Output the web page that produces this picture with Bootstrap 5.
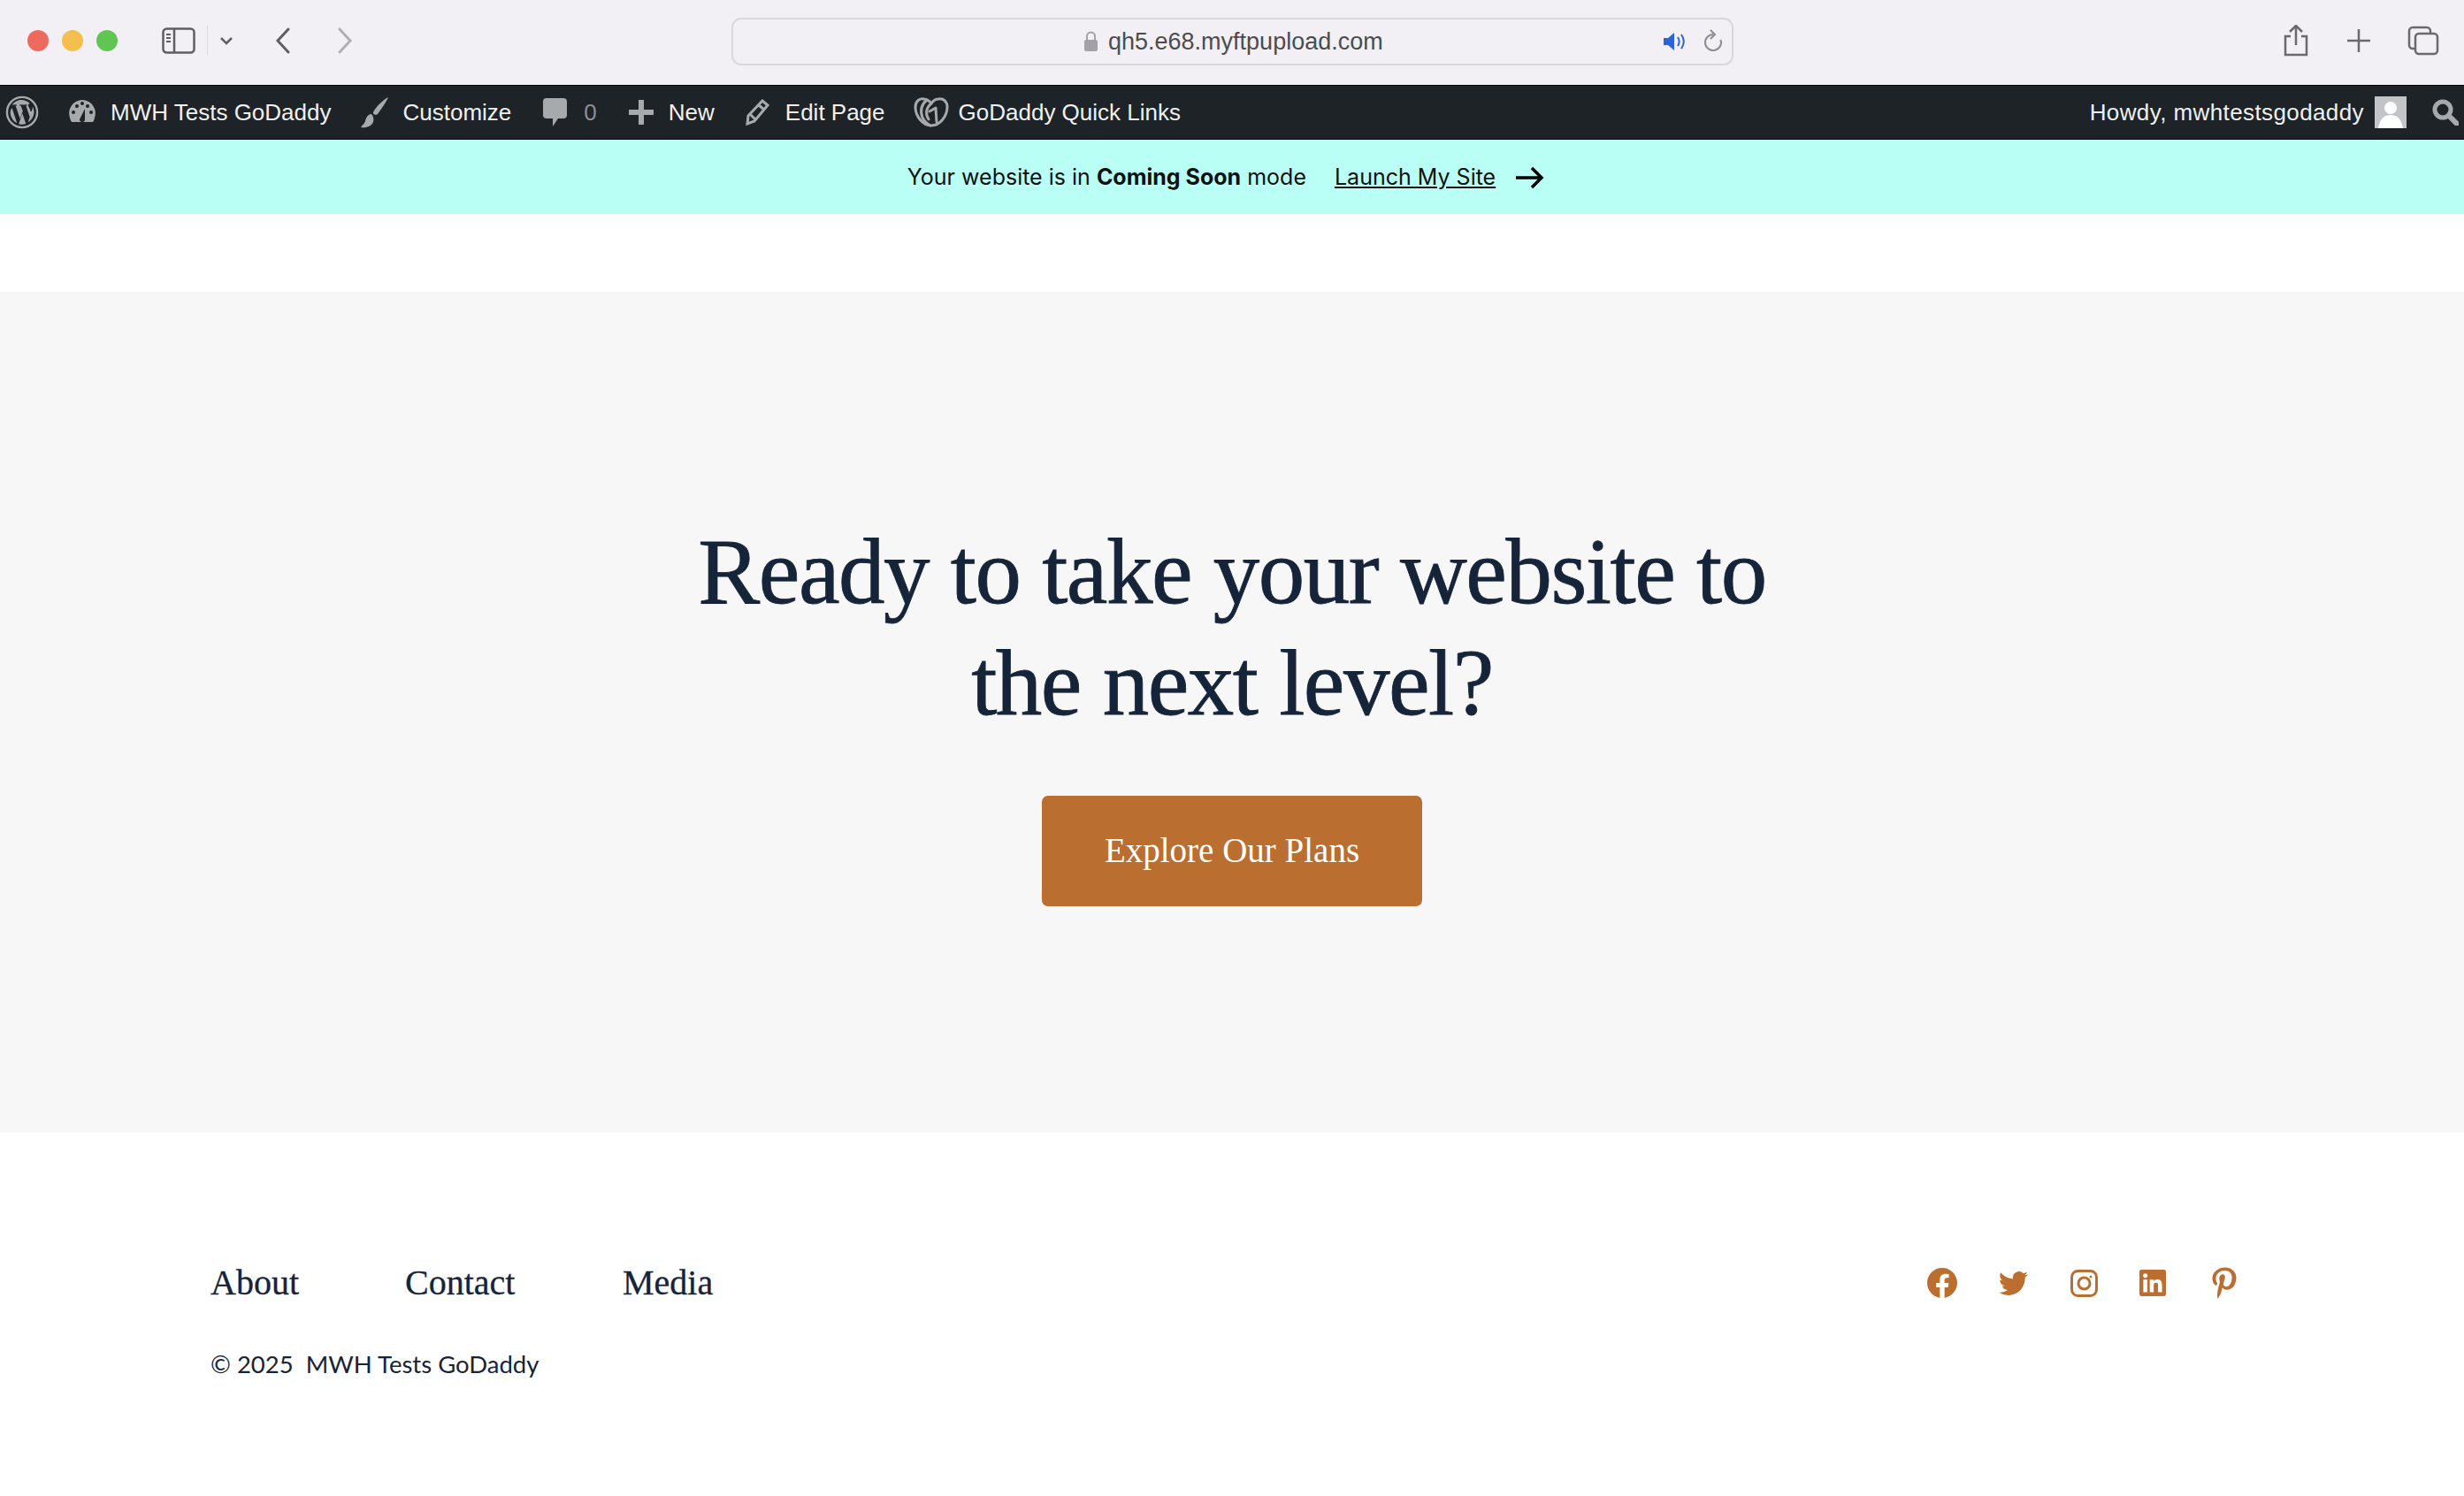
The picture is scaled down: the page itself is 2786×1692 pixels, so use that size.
<!DOCTYPE html>
<html lang="en">
<head>
  <meta charset="UTF-8" />
  <title>MWH Tests GoDaddy</title>
  <meta name="viewport" content="width=device-width, initial-scale=1" />
  <link href="https://cdn.jsdelivr.net/npm/bootstrap@5.3.0/dist/css/bootstrap.min.css" rel="stylesheet" />
  <style>
    body {
      background-color: #fff;
      font-family: "Inter", sans-serif;
    }
    svg { flex-shrink: 0; }
    /* browser toolbar */
    .safari-bar {
      height: 96px;
      background-color: #f2f0f5;
      padding-left: 31px;
      padding-top: 2px;
    }
    .traffic {
      width: 24px;
      height: 24px;
      border-radius: 50%;
      margin-right: 15px;
      margin-top: -6px;
    }
    .url-box {
      width: 1133px;
      height: 54px;
      border: 2px solid #d9d7dc;
      border-radius: 11px;
      font-family: "Liberation Sans", sans-serif;
      font-size: 27px;
      color: #4c4c50;
      padding-left: 396px;
      padding-right: 10px;
      margin-top: -4px;
    }
    /* wp admin bar */
    .admin-bar {
      height: 62px;
      background-color: #1d2327;
      border-top: 1px solid #000;
      border-bottom: 1px solid #000;
      color: #f0f0f1;
      font-family: "Liberation Sans", sans-serif;
      font-size: 26px;
      padding-left: 6px;
      padding-right: 6px;
      white-space: nowrap;
    }
    .bar-num { color: #8c8f94; }
    .howdy-text { letter-spacing: 0.4px; }
    /* coming soon banner */
    .soon-banner {
      height: 84px;
      background-color: #b9fff6;
      color: #111;
      font-size: 25px;
      padding-right: 14px;
      padding-top: 2px;
    }
    .soon-banner a { color: #111; }
    .white-gap { height: 88px; }
    /* hero */
    .hero-block {
      height: 951px;
      background-color: #f7f7f7;
      padding-bottom: 2px;
    }
    .hero-title {
      font-family: "Liberation Serif", serif;
      font-size: 105px;
      line-height: 126px;
      letter-spacing: -1.5px;
      -webkit-text-stroke: 0.8px #16243a;
      color: #16243a;
      margin-bottom: 64px;
    }
    .hero-btn {
      width: 430px;
      height: 125px;
      background-color: #ba6f30;
      color: #fff;
      font-family: "Liberation Serif", serif;
      font-size: 39px;
      border: 0;
      border-radius: 7px;
    }
    /* footer */
    .foot-block {
      height: 411px;
      padding: 144px 257px 0 238px;
      color: #16243a;
    }
    .foot-link {
      font-family: "Liberation Serif", serif;
      font-size: 40px;
      line-height: 52px;
      -webkit-text-stroke: 0.3px #16243a;
      color: #16243a;
      text-decoration: none;
    }
    .foot-copy {
      font-family: "Lato", sans-serif;
      font-size: 27.500px;
      margin-top: 45px;
    }
  </style>
</head>
<body>

  <!-- Browser toolbar -->
  <div class="safari-bar d-flex align-items-center">
    <span class="traffic" style="background:#ee6a5f"></span>
    <span class="traffic" style="background:#f5bf4f"></span>
    <span class="traffic" style="background:#61c554"></span>
    <svg style="margin-left:35px;margin-top:-6px" width="38" height="30" viewBox="0 0 38 30" fill="none" stroke="#5f5f63" stroke-width="2.5"><rect x="1.5" y="1.5" width="35" height="27" rx="4"/><path d="M14 2v26"/><path d="M5 8h5M5 12h5M5 16h5" stroke-width="2"/></svg>
    <span style="width:1px;height:34px;background:#dcdade;margin-left:13px;margin-top:-6px"></span>
    <svg style="margin-left:13px;margin-top:-6px" width="16" height="10" viewBox="0 0 16 10" fill="none" stroke="#5f5f63" stroke-width="2.5"><path d="M2 2l6 6 6-6"/></svg>
    <svg style="margin-left:47px;margin-top:-6px" width="18" height="30" viewBox="0 0 18 30" fill="none" stroke="#5f5f63" stroke-width="3" stroke-linecap="round"><path d="M15 2L3 15l12 13"/></svg>
    <svg style="margin-left:52px;margin-top:-6px" width="18" height="30" viewBox="0 0 18 30" fill="none" stroke="#b0afb3" stroke-width="3" stroke-linecap="round"><path d="M3 2l12 13L3 28"/></svg>
    <div class="url-box d-flex align-items-center" style="margin-left:428px">
      <svg style="margin-right:11px" width="17" height="24" viewBox="0 0 17 24"><path d="M4 11V6a4.500 4.500 0 019 0v5" fill="none" stroke="#a3a3a6" stroke-width="2"/><rect x="1" y="10" width="15" height="13" rx="2" fill="#a3a3a6"/></svg>
      <span class="flex-grow-1">qh5.e68.myftpupload.com</span>
      <svg width="26" height="24" viewBox="0 0 26 24"><path d="M1 8h5l7-6v20l-7-6H1z" fill="#2c63db"/><path d="M17 7c2 3 2 7 0 10M21 4c3.500 5 3.500 11 0 16" fill="none" stroke="#2c63db" stroke-width="2"/></svg>
      <svg style="margin-left:20px" width="22" height="28" viewBox="0 0 22 28" fill="none" stroke="#8d8c90" stroke-width="2"><path d="M11 6a9 9 0 108.500 6"/><path d="M8 1l5 5-5 5"/></svg>
    </div>
    <svg style="margin-left:621px;margin-top:-6px" width="30" height="36" viewBox="0 0 30 36" fill="none" stroke="#6a6a6e" stroke-width="2.500"><path d="M9 13H3v21h24V13h-6"/><path d="M15 23V2M8 8l7-7 7 7"/></svg>
    <svg style="margin-left:42px;margin-top:-6px" width="28" height="28" viewBox="0 0 28 28" stroke="#6a6a6e" stroke-width="2.500"><path d="M14 1v26M1 14h26"/></svg>
    <svg style="margin-left:41px;margin-top:-6px" width="36" height="34" viewBox="0 0 36 34" fill="none" stroke="#6a6a6e" stroke-width="2.500"><path d="M8 26H6a4 4 0 01-4-4V6a4 4 0 014-4h16a4 4 0 014 4v2"/><rect x="9" y="9" width="25" height="23" rx="4"/></svg>
  </div>

  <!-- WP admin bar -->
  <div class="admin-bar d-flex align-items-center">
    <svg width="38" height="40" viewBox="0 0 40 40"><circle cx="20" cy="20" r="18" fill="none" stroke="#a7aaad" stroke-width="2.500"/><path d="M6 20c0 6 3.500 10.500 8 13L8 15c-1.300 1.500-2 3-2 5zm24-1c0-2-1-3-1.500-4.200-.7-1-1.200-2-1.200-3 0-1.200.8-2.100 2-2.200A14 14 0 008 11h1l4.300-.2.7 1-1.800.2 5.400 16 3.200-9.700-2.300-6.300-1.600-.2.200-1 4.300.2 4.300-.2.700 1-1.800.2 5.300 15.900 1.500-4.900c.6-2 1.100-3.400 1.100-4.600zM20.300 21.300L16 34a14 14 0 008.500-.2zM32.500 13c.2 1.500-.2 3.500-1 5.500L27 31.800A14 14 0 0032.500 13z" fill="#a7aaad"/></svg>
    <svg style="margin-left:33px" width="32" height="30" viewBox="0 0 32 30"><path d="M16 1a15 15 0 00-14 20c.5 3 1.500 5 3 5h22c1.500 0 2.500-2 3-5A15 15 0 0016 1z" fill="#a7aaad"/><path d="M13 23l6-12 0 12a3 3 0 11-6 0z" fill="#1d2327"/><circle cx="6" cy="15" r="2" fill="#1d2327"/><circle cx="10" cy="8" r="2" fill="#1d2327"/><circle cx="16" cy="5" r="2" fill="#1d2327"/><circle cx="22" cy="8" r="2" fill="#1d2327"/><circle cx="26" cy="15" r="2" fill="#1d2327"/></svg>
    <span style="margin-left:16px">MWH Tests GoDaddy</span>
    <svg style="margin-left:33px" width="33" height="36" viewBox="0 0 33 36"><path d="M32 1c-3 1-14 10-17 17-1 2 3 4 5 2 4-5 11-16 12-19zM13 20c-4 0-6 4-7 8-1 3-3 4-5 7 6 1 12-1 14-6 1-3 0-7-2-9z" fill="#a7aaad"/></svg>
    <span style="margin-left:15px">Customize</span>
    <svg style="margin-left:36px" width="27" height="32" viewBox="0 0 27 32"><path d="M4 0h19a4 4 0 014 4v15a4 4 0 01-4 4h-6l-6 9v-9H4a4 4 0 01-4-4V4a4 4 0 014-4z" fill="#a7aaad"/></svg>
    <span class="bar-num" style="margin-left:19px">0</span>
    <svg style="margin-left:36px" width="28" height="28" viewBox="0 0 28 28"><path d="M11 0h6v11h11v6H17v11h-6V17H0v-6h11z" fill="#a7aaad"/></svg>
    <span style="margin-left:17px">New</span>
    <svg style="margin-left:35px" width="27" height="30" viewBox="0 0 27 30" fill="none" stroke="#a7aaad" stroke-width="3"><path d="M19 2l6 5L10 25l-8 3 1-9zM15 7l6 5M6 18l5 5" /></svg>
    <span style="margin-left:18px">Edit Page</span>
    <svg style="margin-left:32px" width="40" height="36" viewBox="0 0 40 36" fill="none" stroke="#a7aaad" stroke-width="3" stroke-linecap="round" stroke-linejoin="round"><path d="M20 33C10 33 2 22 2 12 2 5 7 2 12 3c3 .5 6 2 8 5 2-3 5-5 8-5 6-1 10 3 10 9 0 10-8 21-18 21z"/><path d="M15 4C9 9 7 16 10 24c2 4 5 7 9 9"/><path d="M20 8c-6 5-7 12-3 18"/><path d="M18 17l7-4 1 16"/></svg>
    <span style="margin-left:11px">GoDaddy Quick Links</span>
    <span class="howdy-text ms-auto">Howdy, mwhtestsgodaddy</span>
    <svg style="margin-left:12px" width="36" height="36" viewBox="0 0 36 36"><rect width="36" height="36" fill="#c3c4c7"/><circle cx="18" cy="13" r="7" fill="#fff"/><path d="M4 36c2-12 8-15 14-15s12 3 14 15z" fill="#fff"/></svg>
    <svg style="margin-left:29px" width="30" height="30" viewBox="0 0 30 30" fill="none" stroke="#a7aaad"><circle cx="12" cy="12" r="9" stroke-width="5"/><path d="M19 19l9 9" stroke-width="6" stroke-linecap="round"/></svg>
  </div>

  <!-- Coming soon banner -->
  <div class="soon-banner d-flex align-items-center justify-content-center">
    <span>Your website is in <strong>Coming Soon</strong> mode</span>
    <a href="#" style="margin-left:32px">Launch My Site</a>
    <svg style="margin-left:23px" width="32" height="26" viewBox="0 0 32 26" fill="none" stroke="#000" stroke-width="3.500"><path d="M0 13h29M18 2l11 11-11 11"/></svg>
  </div>
  <div class="white-gap"></div>

  <!-- Hero -->
  <section class="hero-block d-flex flex-column align-items-center justify-content-center text-center">
    <h1 class="hero-title fw-normal">Ready to take your website to<br />the next level?</h1>
    <a href="#" class="hero-btn btn d-flex align-items-center justify-content-center">Explore Our Plans</a>
  </section>

  <!-- Footer -->
  <footer class="foot-block">
    <div class="d-flex align-items-center justify-content-between">
      <div class="d-flex">
        <a href="#" class="foot-link" style="width:220px">About</a>
        <a href="#" class="foot-link" style="width:246px">Contact</a>
        <a href="#" class="foot-link">Media</a>
      </div>
      <div class="d-flex align-items-center">
        <svg width="34" height="34" viewBox="0 0 24 24" fill="#ba6f30"><path d="M24 12.073c0-6.627-5.373-12-12-12s-12 5.373-12 12c0 5.990 4.388 10.954 10.125 11.854v-8.385H7.078v-3.470h3.047V9.430c0-3.007 1.792-4.669 4.533-4.669 1.312 0 2.686.235 2.686.235v2.953H15.830c-1.491 0-1.956.925-1.956 1.874v2.250h3.328l-.532 3.470h-2.796v8.385C19.612 23.027 24 18.062 24 12.073z"/></svg>
        <svg style="margin-left:47px" width="33" height="33" viewBox="0 0 24 24" fill="#ba6f30"><path d="M23.953 4.570a10 10 0 01-2.825.775 4.958 4.958 0 002.163-2.723c-.951.555-2.005.959-3.127 1.184a4.920 4.920 0 00-8.384 4.482C7.690 8.095 4.067 6.130 1.640 3.162a4.822 4.822 0 00-.666 2.475c0 1.710.870 3.213 2.188 4.096a4.904 4.904 0 01-2.228-.616v.060a4.923 4.923 0 003.946 4.827 4.996 4.996 0 01-2.212.085 4.936 4.936 0 004.604 3.417 9.867 9.867 0 01-6.102 2.105c-.390 0-.779-.023-1.170-.067a13.995 13.995 0 007.557 2.209c9.053 0 13.998-7.496 13.998-13.985 0-.210 0-.420-.015-.630A9.935 9.935 0 0024 4.590z"/></svg>
        <svg style="margin-left:48px" width="31" height="31" viewBox="0 0 31 31" fill="none" stroke="#ba6f30" stroke-width="3"><rect x="1.500" y="1.500" width="28" height="28" rx="7"/><circle cx="15.500" cy="15.500" r="6.500"/><circle cx="23" cy="8" r="1.500" fill="#ba6f30" stroke="none"/></svg>
        <svg style="margin-left:47px" width="30" height="30" viewBox="0 0 24 24" fill="#ba6f30"><path d="M20.447 20.452h-3.554v-5.569c0-1.328-.027-3.037-1.852-3.037-1.853 0-2.136 1.445-2.136 2.939v5.667H9.351V9h3.414v1.561h.046c.477-.9 1.637-1.850 3.370-1.850 3.601 0 4.267 2.370 4.267 5.455v6.286zM5.337 7.433c-1.144 0-2.063-.926-2.063-2.065 0-1.138.920-2.063 2.063-2.063 1.140 0 2.064.925 2.064 2.063 0 1.139-.925 2.065-2.064 2.065zm1.782 13.019H3.555V9h3.564v11.452zM22.225 0H1.771C.792 0 0 .774 0 1.729v20.542C0 23.227.792 24 1.771 24h20.451C23.200 24 24 23.227 24 22.271V1.729C24 .774 23.200 0 22.222 0h.003z"/></svg>
        <svg style="margin-left:52px" width="28" height="36" viewBox="0 0 384 512" fill="#ba6f30"><path d="M204 6.500C101.400 6.500 0 74.900 0 185.600 0 256 39.600 296 63.600 296c9.900 0 15.600-27.600 15.600-35.400 0-9.300-23.700-29.100-23.700-67.800 0-80.400 61.200-137.400 140.400-137.400 68.100 0 118.500 38.700 118.500 109.800 0 53.100-21.300 152.700-90.300 152.700-24.900 0-46.200-18-46.200-43.800 0-37.800 26.400-74.400 26.400-113.400 0-66.200-93.900-54.200-93.900 25.800 0 16.800 2.100 35.400 9.600 50.700-13.800 59.400-42 147.900-42 209.100 0 18.900 2.700 37.500 4.500 56.400 3.400 3.800 1.700 3.400 6.900 1.500 50.400-69 48.600-82.500 71.400-172.800 12.300 23.400 44.100 36 69.300 36 106.200 0 153.900-103.500 153.900-196.800C384 71.300 298.200 6.500 204 6.500z"/></svg>
      </div>
    </div>
    <div class="foot-copy">© 2025&nbsp; MWH Tests GoDaddy</div>
  </footer>

  <script src="https://cdn.jsdelivr.net/npm/bootstrap@5.3.0/dist/js/bootstrap.bundle.min.js"></script>
</body>
</html>
